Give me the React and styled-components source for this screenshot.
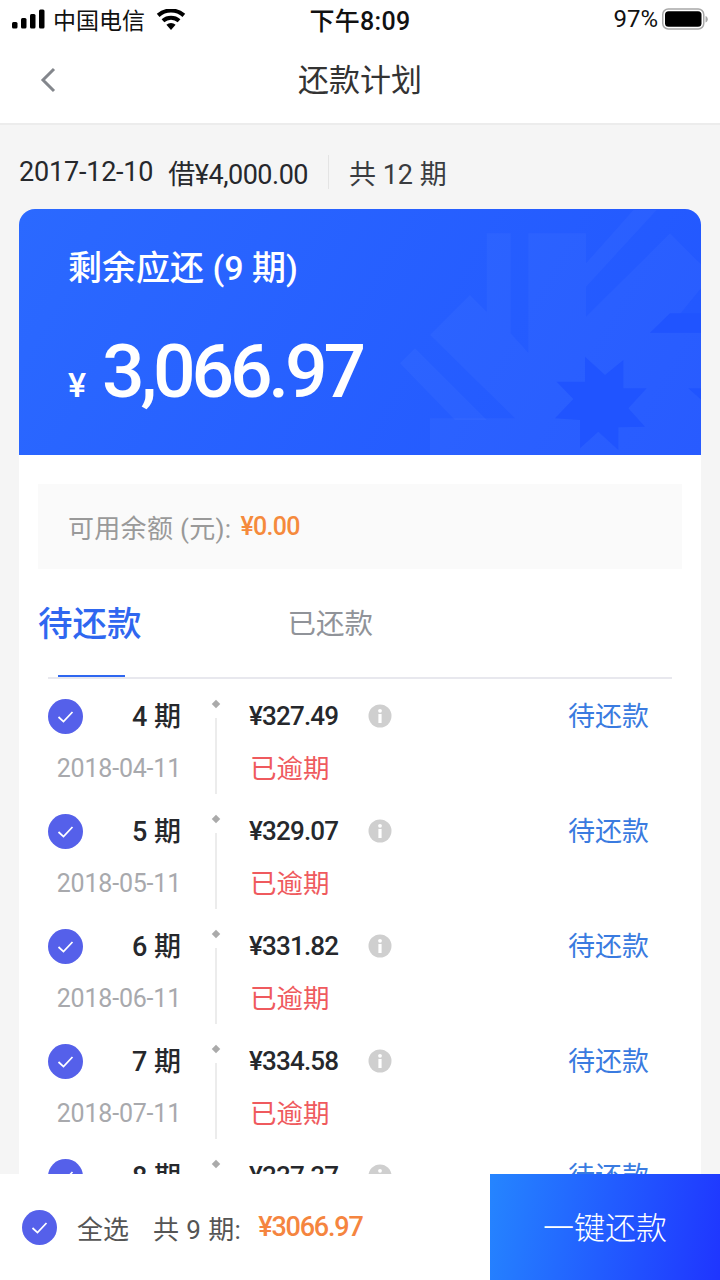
import React from "react";
import styled, { createGlobalStyle } from "styled-components";

const plans = [
  { period: "4", date: "2018-04-11", amount: "¥327.49" },
  { period: "5", date: "2018-05-11", amount: "¥329.07" },
  { period: "6", date: "2018-06-11", amount: "¥331.82" },
  { period: "7", date: "2018-07-11", amount: "¥334.58" },
  { period: "8", date: "2018-08-11", amount: "¥337.37" },
];

function CheckCircle() {
  return (
    <Check viewBox="0 0 35 35">
      <circle cx="17.5" cy="17.5" r="17.5" fill="#5560ea" />
      <path d="M10.5 18l5 4.6 9-9.6" fill="none" stroke="#fff" strokeWidth="1.8" />
    </Check>
  );
}

function App() {
  return (
    <Page>
      <GlobalStyle />
      <StatusBar>
        <StatusLeft>
          <svg width="33" height="20" viewBox="0 0 33 20">
            <rect x="0" y="13" width="5.5" height="6.5" rx="1.5" fill="#000" />
            <rect x="9" y="9" width="5.5" height="10.5" rx="1.5" fill="#000" />
            <rect x="18" y="5" width="5.5" height="14.5" rx="1.5" fill="#000" />
            <rect x="27" y="0.5" width="5.5" height="19" rx="1.5" fill="#000" />
          </svg>
          <span>中国电信</span>
          <svg width="30" height="21" viewBox="0 0 30 21">
            <path d="M15 21l-4.6-5.2a7 7 0 0 1 9.2 0z" fill="#000" />
            <path d="M8.3 13.3L5.6 10.2a14.4 14.4 0 0 1 18.8 0l-2.7 3.1a10.2 10.2 0 0 0-13.4 0z" fill="#000" />
            <path d="M3.5 7.9L.8 4.8a21.6 21.6 0 0 1 28.4 0l-2.7 3.1a17.6 17.6 0 0 0-23 0z" fill="#000" />
          </svg>
        </StatusLeft>
        <Clock>下午8:09</Clock>
        <StatusRight>
          <span>97%</span>
          <svg width="46" height="22" viewBox="0 0 46 22">
            <rect x="0.75" y="1" width="41" height="20" rx="5.5" fill="none" stroke="#a8a8a8" strokeWidth="1.5" />
            <rect x="3" y="3.2" width="36.5" height="15.6" rx="3.5" fill="#000" />
            <path d="M43.5 8v6.5c1.5-.4 2.3-1.700 2.300-3.200s-.8-2.900-2.300-3.300z" fill="#a8a8a8" />
          </svg>
        </StatusRight>
      </StatusBar>

      <NavBar>
        <BackIcon viewBox="0 0 18 26">
          <path d="M15 2L4 13l11 11" fill="none" stroke="#83868c" strokeWidth="3" />
        </BackIcon>
        <NavTitle>还款计划</NavTitle>
      </NavBar>

      <Content>
        <LoanInfo>
          <LoanDate>2017-12-10</LoanDate>
          <LoanAmount>借¥4,000.00</LoanAmount>
          <LoanDivider />
          <LoanTotal>共 12 期</LoanTotal>
        </LoanInfo>

        <Hero>
          <Watermark viewBox="0 0 1080 810">
            <g fill="#fff" fillOpacity="0.03">
              <path d="M330 285l50 50V100h72v300l53 58V100h173v250l252-250 95 95v67l-63 78-92 58h155v372H210V655h255L210 405z" />
              <path d="M165 445l-45 45 165 170h95z" />
              <path d="M820 30h70L678 260v-70z" />
            </g>
            <path
              d="M675 470l60 55 55-45v85h70l-55 60 50 55-80 2v68l-60-55-55 50v-85l-75-5 55-58-50-52h85z"
              fill="#2054ff"
            />
            <path d="M930 340h95v58H870z" fill="#2054ff" />
            <path d="M985 565h40v35z" fill="#2054ff" />
          </Watermark>
          <HeroLabel>剩余应还 (9 期)</HeroLabel>
          <HeroAmount>
            <HeroCurrency>¥</HeroCurrency>
            <HeroValue>3,066.97</HeroValue>
          </HeroAmount>
        </Hero>

        <Panel>
          <Balance>
            <BalanceLabel>可用余额 (元):</BalanceLabel>
            <BalanceValue>¥0.00</BalanceValue>
          </Balance>

          <Tabs>
            <Tab $active>待还款</Tab>
            <Tab>已还款</Tab>
          </Tabs>

          <TabLine>
            <TabMarker />
          </TabLine>

          <List>
            {plans.map((plan) => (
              <Row key={plan.period}>
                <LeftCol>
                  <LineTop>
                    <CheckCircle />
                    <Period>{plan.period} 期</Period>
                  </LineTop>
                  <DueDate>{plan.date}</DueDate>
                </LeftCol>
                <Timeline>
                  <Dot />
                  <Stem />
                </Timeline>
                <AmountCol>
                  <LineTop>
                    <Amount>{plan.amount}</Amount>
                    <Info viewBox="0 0 24 24">
                      <circle cx="12" cy="12" r="11.500" fill="#cfcfcf" />
                      <rect x="10.400" y="10" width="3.200" height="9" fill="#fff" />
                      <circle cx="12" cy="6.800" r="1.900" fill="#fff" />
                    </Info>
                  </LineTop>
                  <Overdue>已逾期</Overdue>
                </AmountCol>
                <StatusText>待还款</StatusText>
              </Row>
            ))}
          </List>
        </Panel>
      </Content>

      <Footer>
        <FooterLeft>
          <CheckCircle />
          <SelectAll>全选</SelectAll>
          <FooterCount>共 9 期:</FooterCount>
          <FooterTotal>¥3066.97</FooterTotal>
        </FooterLeft>
        <PayButton>一键还款</PayButton>
      </Footer>
    </Page>
  );
}

const GlobalStyle = createGlobalStyle`
  * {
    box-sizing: border-box;
  }
  body {
    margin: 0;
    font-family: Roboto, "Noto Sans CJK SC", sans-serif;
    background: #f5f5f5;
  }
`;

const Page = styled.div`
  position: relative;
  width: 720px;
  height: 1280px;
  overflow: hidden;
  background: #f5f5f5;
`;

const StatusBar = styled.div`
  height: 40px;
  padding: 0 12px 2px 12px;
  background: #fff;
  display: flex;
  align-items: center;
  justify-content: space-between;
  color: #111;
  font-size: 23px;
`;

const StatusLeft = styled.div`
  width: 200px;
  display: flex;
  align-items: center;
  gap: 8px;
  svg:last-child {
    margin-left: 3px;
  }
`;

const Clock = styled.div`
  font-size: 25px;
  font-weight: 500;
  letter-spacing: 0.3px;
`;

const StatusRight = styled.div`
  width: 200px;
  display: flex;
  align-items: center;
  justify-content: flex-end;
  gap: 4px;
  font-size: 24px;
`;

const NavBar = styled.div`
  position: relative;
  height: 85px;
  padding-bottom: 8px;
  background: #fff;
  border-bottom: 2px solid #ececec;
  display: flex;
  align-items: center;
  justify-content: center;
`;

const BackIcon = styled.svg`
  position: absolute;
  left: 39px;
  top: 27px;
  width: 18px;
  height: 26px;
`;

const NavTitle = styled.div`
  font-size: 31px;
  color: #333;
`;

const Content = styled.div`
  padding: 0 19px;
`;

const LoanInfo = styled.div`
  height: 84px;
  padding-top: 10px;
  display: flex;
  align-items: center;
  font-size: 27px;
  color: #26282c;
`;

const LoanDate = styled.span`
  letter-spacing: -0.2px;
`;

const LoanAmount = styled.span`
  margin-left: 15px;
  letter-spacing: -0.5px;
`;

const LoanDivider = styled.span`
  width: 1px;
  height: 34px;
  margin: 0 20px;
  background: #e4e4e4;
`;

const LoanTotal = styled.span`
  color: #3a3c40;
`;

const Hero = styled.div`
  position: relative;
  height: 246px;
  padding: 35px 49px 0;
  border-radius: 16px 16px 0 0;
  overflow: hidden;
  background: linear-gradient(120deg, #2b69ff 0%, #2256ff 100%);
  color: #fff;
`;

const Watermark = styled.svg`
  position: absolute;
  top: -9px;
  right: -19px;
  width: 360px;
  height: 270px;
`;

const HeroLabel = styled.div`
  position: relative;
  font-size: 34px;
  line-height: 48px;
  font-weight: 500;
`;

const HeroAmount = styled.div`
  position: relative;
  margin-top: 37px;
  display: flex;
  align-items: baseline;
`;

const HeroCurrency = styled.span`
  font-size: 34px;
  font-weight: 500;
`;

const HeroValue = styled.span`
  margin-left: 16px;
  font-size: 75px;
  line-height: 84px;
  font-weight: 500;
  letter-spacing: -4.2px;
`;

const Panel = styled.div`
  height: 900px;
  padding: 29px 19px 0;
  background: #fff;
`;

const Balance = styled.div`
  height: 85px;
  padding-left: 30px;
  display: flex;
  align-items: center;
  gap: 9px;
  background: #fafafa;
`;

const BalanceLabel = styled.span`
  font-size: 26px;
  letter-spacing: 0.3px;
  color: #999;
`;

const BalanceValue = styled.span`
  color: #f58a3c;
  font-size: 25px;
  font-weight: 500;
  letter-spacing: -0.7px;
`;

const Tabs = styled.div`
  height: 108px;
  padding-bottom: 4px;
  display: flex;
  align-items: center;
  gap: 146px;
`;

const Tab = styled.div`
  font-size: ${(p) => (p.$active ? "34.5px" : "28.5px")};
  font-weight: ${(p) => (p.$active ? 500 : 400)};
  color: ${(p) => (p.$active ? "#2f67f0" : "#909399")};
`;

const TabLine = styled.div`
  position: relative;
  margin: 0 10px;
  height: 2px;
  background: #e8e8ee;
`;

const TabMarker = styled.div`
  position: absolute;
  left: 10px;
  top: -2px;
  width: 67px;
  height: 2px;
  background: #2f67f0;
`;

const List = styled.div`
  padding: 15px 10px 0;
`;

const Row = styled.div`
  height: 115px;
  display: flex;
`;

const LeftCol = styled.div`
  width: 133px;
  display: flex;
  flex-direction: column;
`;

const LineTop = styled.div`
  height: 44px;
  display: flex;
  align-items: center;
  justify-content: space-between;
`;

const Check = styled.svg`
  width: 35px;
  height: 35px;
  flex: none;
`;

const Period = styled.div`
  padding-bottom: 3px;
  font-size: 27px;
  font-weight: 500;
  color: #26282c;
`;

const DueDate = styled.div`
  margin-top: 14px;
  text-align: right;
  font-size: 25px;
  line-height: 34px;
  letter-spacing: -0.2px;
  color: #a8a9ad;
`;

const Timeline = styled.div`
  width: 70px;
  padding-top: 7px;
  display: flex;
  flex-direction: column;
  align-items: center;
`;

const Dot = styled.div`
  width: 6px;
  height: 6px;
  background: #aaa;
  transform: rotate(45deg);
`;

const Stem = styled.div`
  margin-top: 11px;
  width: 2px;
  height: 76px;
  background: #ececec;
`;

const AmountCol = styled.div`
  width: 143px;
  margin-left: -2px;
  display: flex;
  flex-direction: column;
`;

const Amount = styled.div`
  font-size: 26px;
  font-weight: 500;
  letter-spacing: -0.8px;
  color: #26282c;
`;

const Info = styled.svg`
  width: 24px;
  height: 24px;
`;

const Overdue = styled.div`
  margin-top: 14px;
  padding-left: 1px;
  font-size: 26.5px;
  line-height: 34px;
  color: #ef5a5e;
`;

const StatusText = styled.div`
  margin-left: auto;
  margin-right: 23px;
  height: 46px;
  line-height: 46px;
  font-size: 27px;
  color: #3a7be0;
`;

const Footer = styled.div`
  position: absolute;
  left: 0;
  right: 0;
  bottom: 0;
  height: 106px;
  display: flex;
  background: #fff;
`;

const FooterLeft = styled.div`
  flex: 1;
  padding-left: 22px;
  display: flex;
  align-items: center;
`;

const SelectAll = styled.span`
  margin-left: 20px;
  font-size: 26px;
  color: #555;
`;

const FooterCount = styled.span`
  margin-left: 24px;
  font-size: 26px;
  letter-spacing: 0.4px;
  color: #555;
`;

const FooterTotal = styled.span`
  margin-left: 17px;
  font-size: 27px;
  font-weight: 500;
  letter-spacing: -1.200px;
  color: #f5853f;
`;

const PayButton = styled.div`
  width: 230px;
  padding-bottom: 3px;
  display: flex;
  align-items: center;
  justify-content: center;
  background: linear-gradient(100deg, #2585ff 0%, #1f35ff 100%);
  font-size: 31px;
  font-weight: 300;
  color: #fff;
`;

export default App;
